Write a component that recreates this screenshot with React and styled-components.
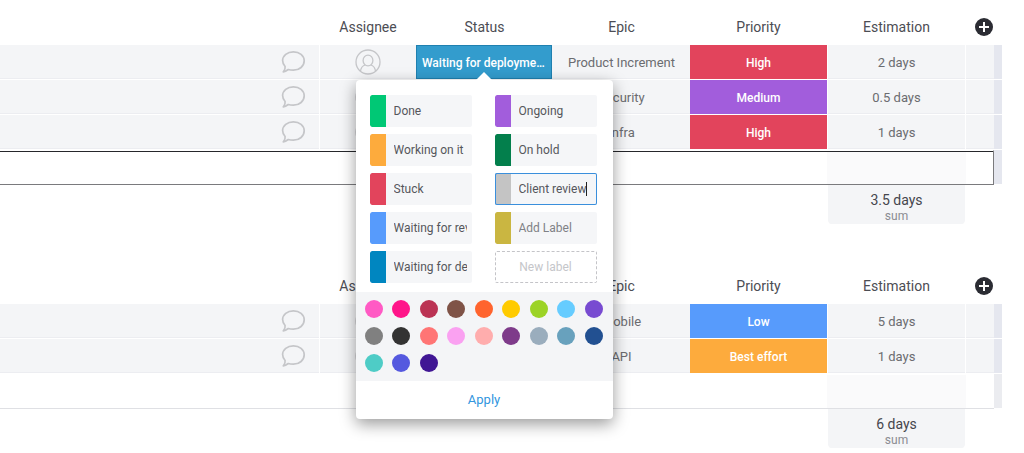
import React, { useState } from "react";
import styled, { createGlobalStyle } from "styled-components";

const GlobalStyle = createGlobalStyle`
  * {
    box-sizing: border-box;
  }

  body {
    margin: 0;
    background: #fff;
    color: #55565c;
    font-family: Roboto, "Liberation Sans", sans-serif;
    font-size: 13px;
  }

  button,
  input {
    margin: 0;
    padding: 0;
    border: 0;
    font: inherit;
    color: inherit;
  }
`;

const Page = styled.main`
  display: flex;
  flex-direction: column;
  gap: 35px;
  padding-right: 22px;
`;

const Board = styled.table`
  width: 100%;
  table-layout: fixed;
  border-collapse: separate;
  border-spacing: 0;
`;

const Col = styled.col`
  width: ${(props) => props.$width || "auto"};
`;

const HeadCell = styled.th`
  height: 45px;
  padding: 8px 0 0;
  color: #4c4d54;
  font-size: 14px;
  font-weight: 400;
  line-height: 20px;
`;

const PlusButton = styled.button`
  display: block;
  width: 18px;
  height: 18px;
  margin: 0 auto;
  background: none;
`;

const Cell = styled.td`
  position: relative;
  height: 35px;
  padding: 0;
  background: #f4f5f7;
  border-bottom: 1px solid #fff;
  box-shadow: inset 0 -1px #ecedf1;
  color: #6b6c70;
  line-height: 20px;
  text-align: center;
`;

const TextCell = styled(Cell)`
  padding-top: 2px;
`;

const ItemCell = styled(Cell)`
  padding-right: 13px;
  border-right: 1px solid #fff;
  text-align: right;
`;

const EstimationCell = styled(TextCell)`
  border-left: 1px solid #fff;
  border-right: 1px solid #fff;
`;

const EndCell = styled.td`
  padding: 0;
  background: ${(props) => (props.$light ? "#ebecf0" : "#e5e7ef")};
  border-bottom: 1px solid #fff;
`;

const IconButton = styled.button`
  display: inline-block;
  vertical-align: middle;
  background: none;

  svg {
    display: block;
  }
`;

const ColorButton = styled.button`
  display: block;
  width: 100%;
  height: 34px;
  padding: 2px 8px 0;
  overflow: hidden;
  background: ${(props) => props.$color};
  color: #fff;
  font-size: 12px;
  font-weight: 500;
  text-overflow: ellipsis;
  white-space: nowrap;
`;

const StatusButton = styled(ColorButton)`
  width: 136px;
  border: 1px solid #1f80b0;
  padding: 1px 5px 0;
`;

const AddCell = styled.td`
  height: 35px;
  padding: 0;
  border-top: 1px solid #fff;
  box-shadow: ${(props) => (props.$active ? "inset 0 1px #26272b" : "none")};
  border-bottom: 1px solid ${(props) => (props.$active ? "#7a7a7d" : "#dfe0e4")};
  border-right: ${(props) => (props.$last ? "1px solid #7a7a7d" : "0")};
`;

const AddEstimation = styled(AddCell)`
  background: #fafafb;
`;

const AddInput = styled.input`
  display: block;
  width: 100%;
  height: 32px;
  padding-left: 12px;
  background: transparent;
  outline: none;
`;

const SumCell = styled.td`
  height: 39px;
  padding: 4px 0 2px;
  background: #f4f5f7;
  background-clip: padding-box;
  border-left: 1px solid #fff;
  border-right: 1px solid #fff;
  border-radius: 0 0 4px 4px;
  text-align: center;
`;

const SumValue = styled.div`
  color: #45464d;
  font-size: 14px;
  line-height: 20px;
`;

const SumLabel = styled.div`
  color: #8b8c92;
  font-size: 12px;
  line-height: 12px;
`;

const Popover = styled.div`
  position: absolute;
  z-index: 2;
  top: 100%;
  left: 50%;
  width: 257px;
  margin: 1px 0 0 -129px;
  background: #fff;
  border-radius: 4px;
  box-shadow: 0 5px 16px rgba(0, 0, 0, 0.4);
  text-align: left;

  &::before {
    content: "";
    position: absolute;
    bottom: 100%;
    left: 50%;
    margin-left: -8px;
    border: 8px solid transparent;
    border-top: 0;
    border-bottom-color: #fff;
  }
`;

const Labels = styled.div`
  display: grid;
  grid-template-columns: 1fr 1fr;
  grid-auto-flow: column;
  grid-template-rows: repeat(5, 32px);
  gap: 7px 23px;
  padding: 15px 16px 9px 14px;
`;

const Label = styled.label`
  display: flex;
  align-items: center;
  min-width: 0;
  padding-right: 5px;
  overflow: hidden;
  background: #f5f6f8;
  border-radius: 2px;
  box-shadow: ${(props) => (props.$active ? "inset 0 0 0 1px #3a8fdc" : "none")};
`;

const Swatch = styled.span`
  flex: none;
  align-self: stretch;
  width: 16px;
  margin-right: 8px;
  background: ${(props) => props.$color};
  border: ${(props) => (props.$active ? "1px solid #3a8fdc" : "0")};
  border-right: 0;
  border-radius: 2px 0 0 2px;
`;

const LabelInput = styled.input`
  flex: ${(props) => (props.$active ? "none" : "1")};
  field-sizing: ${(props) => (props.$active ? "content" : "fixed")};
  min-width: 0;
  background: transparent;
  caret-color: transparent;
  color: #55565c;
  font-size: 12px;
  line-height: 20px;
  outline: none;

  &::placeholder {
    color: #808186;
  }
`;

const Caret = styled.span`
  width: 1px;
  height: 14px;
  background: #222;
`;

const NewLabel = styled.button`
  background: #fff;
  border: 1px dashed #c4c4c8;
  border-radius: 2px;
  color: #c5c6ca;
  font-size: 12px;
`;

const Palette = styled.div`
  display: grid;
  grid-template-columns: repeat(9, 18px);
  justify-content: space-between;
  row-gap: 9px;
  padding: 8px 10px 9px 9px;
  background: #f4f5f7;
`;

const Dot = styled.button`
  height: 18px;
  background: ${(props) => props.$color};
  border-radius: 50%;
`;

const Apply = styled.button`
  display: block;
  width: 100%;
  height: 38px;
  background: none;
  color: #3296de;
`;

const labels = [
  { text: "Done", color: "#00c875" },
  { text: "Working on it", color: "#fdab3d" },
  { text: "Stuck", color: "#e2445c" },
  { text: "Waiting for review", color: "#579bfc" },
  { text: "Waiting for deployment", color: "#0086c0" },
  { text: "Ongoing", color: "#a25ddc" },
  { text: "On hold", color: "#037f4c" },
  { text: "Client review", color: "#c4c4c4", active: true },
  { text: "Add Label", color: "#cab641", placeholder: true },
];

const palette = [
  "#ff5ac4", "#ff158a", "#bb3354", "#7f5347", "#ff642e", "#ffcb00", "#9cd326", "#66ccff", "#784bd1",
  "#808080", "#333333", "#ff7575", "#faa1f1", "#ffadad", "#7e3b8a", "#9aadbd", "#68a1bd", "#225091",
  "#4eccc6", "#5559df", "#401694",
];

const priorities = {
  High: "#e2445c",
  Medium: "#a25ddc",
  Low: "#579bfc",
  "Best effort": "#fdab3d",
};

const groups = [
  {
    id: "current",
    sum: "3.5 days",
    adding: true,
    items: [
      { epic: "Product Increment", priority: "High", days: "2 days", status: "Waiting for deployment" },
      { epic: "Security", priority: "Medium", days: "0.5 days" },
      { epic: "Infra", priority: "High", days: "1 days" },
    ],
  },
  {
    id: "next",
    sum: "6 days",
    items: [
      { epic: "Mobile", priority: "Low", days: "5 days" },
      { epic: "API", priority: "Best effort", days: "1 days" },
    ],
  },
];

const ChatIcon = () => (
  <svg width="26" height="24" viewBox="0 0 26 24" fill="none" stroke="#c5c6c9" strokeWidth="1.7" strokeLinejoin="round">
    <path d="M13.4 1.8C7.3 1.8 2.6 5.6 2.6 10.6c0 2.4 1 4.3 2.5 5.9.3 2-.4 3.9-1.8 5.3 2-.1 3.600-1.200 5-2.300 1.500.6 3.200.7 5.100.7 6.100 0 10.800-4.100 10.800-9.400S19.500 1.800 13.400 1.800z" />
  </svg>
);

const PersonIcon = () => (
  <svg width="26" height="26" viewBox="0 0 26 26" fill="none" stroke="#c5c6c9" strokeWidth="1.3">
    <circle cx="13" cy="13" r="12" />
    <ellipse cx="13" cy="11.5" rx="4.9" ry="5.4" />
    <path d="M5.5 22.3c.3-3.3 1.700-5.300 4.600-6.300M20.500 22.300c-.3-3.300-1.700-5.300-4.600-6.300" />
  </svg>
);

const PlusIcon = () => (
  <svg width="18" height="18" viewBox="0 0 18 18">
    <circle cx="9" cy="9" r="9" fill="#2b2c33" />
    <path d="M9 4v10M4 9h10" stroke="#fff" strokeWidth="2" />
  </svg>
);

const LabelPicker = () => {
  const [names, setNames] = useState(labels.map((l) => (l.placeholder ? "" : l.text)));

  const rename = (index, value) =>
    setNames(names.map((name, i) => (i === index ? value : name)));

  return (
    <Popover>
      <Labels>
        {labels.map((label, i) => (
          <Label key={label.text} $active={label.active}>
            <Swatch $color={label.color} $active={label.active} />
            <LabelInput
              aria-label={label.text}
              value={names[i]}
              placeholder={label.placeholder ? label.text : undefined}
              onChange={(e) => rename(i, e.target.value)}
              $active={label.active}
            />
            {label.active && <Caret />}
          </Label>
        ))}
        <NewLabel type="button">New label</NewLabel>
      </Labels>
      <Palette>
        {palette.map((color) => (
          <Dot key={color} type="button" aria-label={color} $color={color} />
        ))}
      </Palette>
      <Apply type="button">Apply</Apply>
    </Popover>
  );
};

const Group = ({ group }) => (
  <Board>
    <colgroup>
      <Col />
      <Col $width="96px" />
      <Col $width="137px" />
      <Col $width="137px" />
      <Col $width="137px" />
      <Col $width="139px" />
      <Col $width="28px" />
      <Col $width="8px" />
    </colgroup>
    <thead>
      <tr>
        <HeadCell />
        <HeadCell>Assignee</HeadCell>
        <HeadCell>Status</HeadCell>
        <HeadCell>Epic</HeadCell>
        <HeadCell>Priority</HeadCell>
        <HeadCell>Estimation</HeadCell>
        <HeadCell colSpan={2}>
          <PlusButton type="button" aria-label="Add column">
            <PlusIcon />
          </PlusButton>
        </HeadCell>
      </tr>
    </thead>
    <tbody>
      {group.items.map((item) => (
        <tr key={item.epic}>
          <ItemCell>
            <IconButton type="button" aria-label="Open updates">
              <ChatIcon />
            </IconButton>
          </ItemCell>
          <Cell>
            <IconButton type="button" aria-label="Assign person">
              <PersonIcon />
            </IconButton>
          </Cell>
          <Cell>
            {item.status && (
              <>
                <StatusButton type="button" $color="#339ccd">
                  {item.status}
                </StatusButton>
                <LabelPicker />
              </>
            )}
          </Cell>
          <TextCell>{item.epic}</TextCell>
          <Cell>
            <ColorButton type="button" $color={priorities[item.priority]}>
              {item.priority}
            </ColorButton>
          </Cell>
          <EstimationCell>{item.days}</EstimationCell>
          <Cell />
          <EndCell />
        </tr>
      ))}
      <tr>
        <AddCell colSpan={5} $active={group.adding}>
          <AddInput type="text" aria-label="Add item" />
        </AddCell>
        <AddEstimation $active={group.adding} />
        <AddCell $active={group.adding} $last={group.adding} />
        <EndCell $light={!group.adding} />
      </tr>
    </tbody>
    <tfoot>
      <tr>
        <td colSpan={5} />
        <SumCell>
          <SumValue>{group.sum}</SumValue>
          <SumLabel>sum</SumLabel>
        </SumCell>
        <td colSpan={2} />
      </tr>
    </tfoot>
  </Board>
);

const App = () => {
  return (
    <>
      <GlobalStyle />
      <Page>
        {groups.map((group) => (
          <Group key={group.id} group={group} />
        ))}
      </Page>
    </>
  );
};

export default App;
